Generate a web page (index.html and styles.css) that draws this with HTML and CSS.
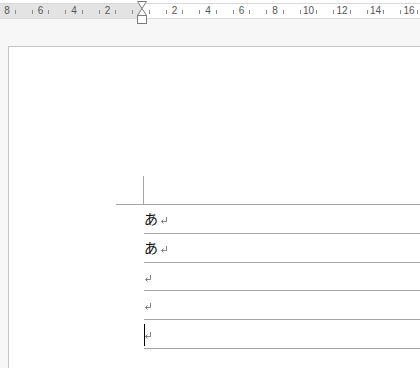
FILE: index.html
```html
<!DOCTYPE html>
<html>
<head>
  <title>Document</title>
  <link rel="stylesheet" href="styles.css">
</head>
<body>

  <!-- Ruler -->
  <div class="ruler">
    <div class="ruler-scale">
      <div class="cell"><i></i><span>8</span><i></i></div>
      <div class="cell"><i></i><span>6</span><i></i></div>
      <div class="cell"><i></i><span>4</span><i></i></div>
      <div class="cell"><i></i><span>2</span><i></i></div>
      <div class="cell"><i></i><span></span><i></i></div>
      <div class="cell"><i></i><span>2</span><i></i></div>
      <div class="cell"><i></i><span>4</span><i></i></div>
      <div class="cell"><i></i><span>6</span><i></i></div>
      <div class="cell"><i></i><span>8</span><i></i></div>
      <div class="cell"><i></i><span>10</span><i></i></div>
      <div class="cell"><i></i><span>12</span><i></i></div>
      <div class="cell"><i></i><span>14</span><i></i></div>
      <div class="cell"><i></i><span>16</span><i></i></div>
    </div>
    <svg class="indent-marker" width="10" height="25" viewBox="0 0 10 25">
      <polygon points="0.5,0.5 9.5,0.5 5,7.5" fill="#fff" stroke="#7c7c7c" />
      <polygon points="5,7.5 0.5,14.5 9.5,14.5" fill="#fff" stroke="#7c7c7c" />
      <rect x="0.5" y="14.5" width="9" height="8" fill="#fff" stroke="#7c7c7c" />
    </svg>
  </div>

  <!-- Page -->
  <div class="workspace">
    <div class="page">
      <div class="corner">
        <div class="corner-mark"></div>
        <div class="corner-rest"></div>
      </div>
      <div class="rows">
        <div class="row">あ<svg class="ret" width="8" height="7" viewBox="0 0 8 7"><path d="M6.5 0 V4.5 H1.5 M3.5 2.5 L1.5 4.5 L3.5 6.5" fill="none" stroke="#808080" /></svg></div>
        <div class="row">あ<svg class="ret" width="8" height="7" viewBox="0 0 8 7"><path d="M6.5 0 V4.5 H1.5 M3.5 2.5 L1.5 4.5 L3.5 6.5" fill="none" stroke="#808080" /></svg></div>
        <div class="row"><svg class="ret first" width="8" height="7" viewBox="0 0 8 7"><path d="M6.5 0 V4.5 H1.5 M3.5 2.5 L1.5 4.5 L3.5 6.5" fill="none" stroke="#808080" /></svg></div>
        <div class="row"><svg class="ret first" width="8" height="7" viewBox="0 0 8 7"><path d="M6.5 0 V4.5 H1.5 M3.5 2.5 L1.5 4.5 L3.5 6.5" fill="none" stroke="#808080" /></svg></div>
        <div class="row"><span class="caret"></span><svg class="ret first" width="8" height="7" viewBox="0 0 8 7"><path d="M6.5 0 V4.5 H1.5 M3.5 2.5 L1.5 4.5 L3.5 6.5" fill="none" stroke="#808080" /></svg></div>
      </div>
    </div>
  </div>

</body>
</html>
```

FILE: styles.css
```css
body {
  margin: 0;
  padding: 0;
  font-family: "Liberation Sans", Arial, sans-serif;
  background-color: #ffffff;
  overflow: hidden;
  height: 368px;
}

/* Ruler */
.ruler {
  position: relative;
  height: 14px;
  margin-top: 3px;
  border-top: 1px solid #dadada;
  border-bottom: 1px solid #dadada;
  background: linear-gradient(to right, #e3e3e3 142px, #ffffff 142px);
}

.ruler-scale {
  display: flex;
  margin-left: -9.75px;
  height: 14px;
}

.cell {
  flex: 0 0 33.5px;
  display: flex;
  justify-content: center;
  align-items: center;
}

.cell i {
  width: 1px;
  height: 4px;
  background-color: #8c8c8c;
  margin-top: 1px;
}

.cell span {
  width: 15.8px;
  text-align: center;
  font-size: 10px;
  line-height: 14px;
  color: #555555;
}

.indent-marker {
  position: absolute;
  left: 137px;
  top: -3px;
}

/* Page */
.workspace {
  box-sizing: border-box;
  background-color: #f7f7f7;
  padding-top: 27px;
  padding-left: 8px;
  height: 349px;
  overflow: hidden;
}

.page {
  box-sizing: border-box;
  background-color: #ffffff;
  border-top: 1px solid #c4c4c4;
  border-left: 1px solid #c4c4c4;
  padding-top: 129px;
  padding-left: 107px;
  height: 322px;
}

.corner {
  display: flex;
}

.corner-mark {
  width: 27px;
  height: 28px;
  border-right: 1px solid #a5a5a5;
  border-bottom: 1px solid #a5a5a5;
}

.corner-rest {
  flex: 1;
  border-bottom: 1px solid #a5a5a5;
}

.rows {
  margin-left: 28px;
}

.row {
  position: relative;
  height: 27.8px;
  line-height: 27.8px;
  border-bottom: 1px solid #a5a5a5;
  font-family: "Noto Sans CJK JP", sans-serif;
  font-size: 14px;
  color: #111111;
}

.ret {
  vertical-align: baseline;
  margin-left: 2px;
}

.ret.first {
  margin-left: 0;
}

.caret {
  position: absolute;
  left: 0;
  top: 4px;
  width: 1px;
  height: 22px;
  background-color: #000000;
}
```
